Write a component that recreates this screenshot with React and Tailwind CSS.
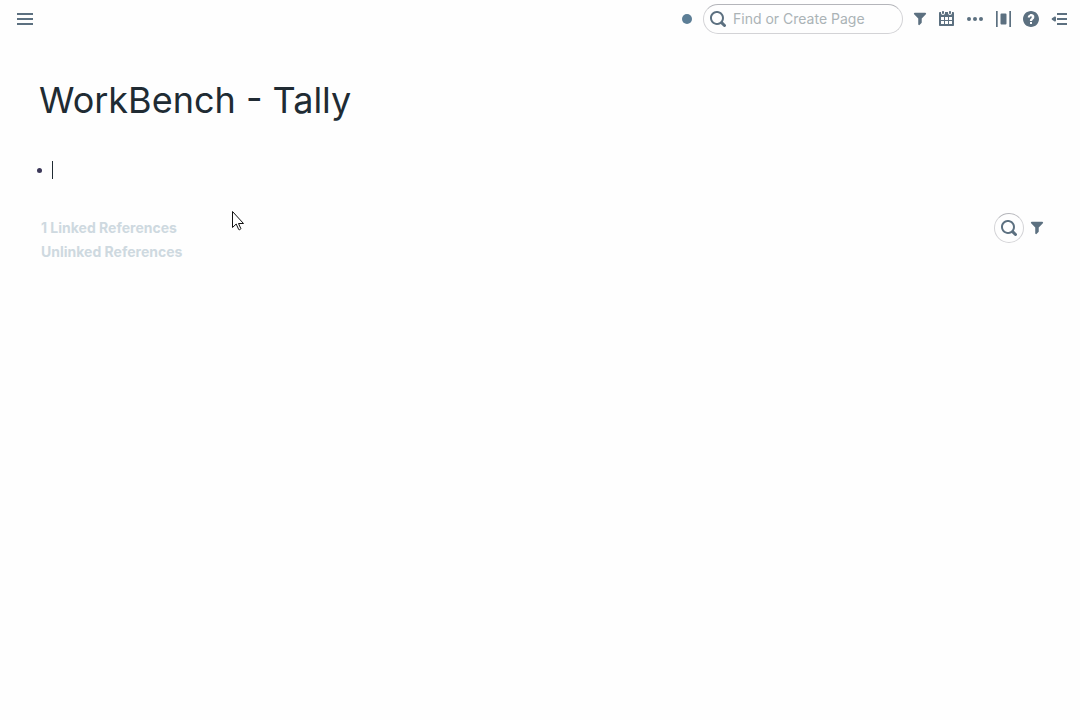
import React from "react";

function Icon({ children, className = "size-4" }) {
  return (
    <svg className={`block ${className}`} viewBox="0 0 16 16" fill="currentColor" fillRule="evenodd" aria-hidden="true">
      {children}
    </svg>
  );
}

const MenuIcon = () => (
  <Icon>
    <path d="M0 2h16v2H0zM0 7h16v2H0zM0 12h16v2H0z" />
  </Icon>
);

const SearchIcon = () => (
  <Icon>
    <path d="M15.55 13.43l-2.67-2.68a6.94 6.94 0 001.11-3.76c0-3.87-3.13-7-7-7s-7 3.13-7 7 3.13 7 7 7c1.39 0 2.68-.42 3.76-1.11l2.68 2.67a1.498 1.498 0 102.12-2.12zm-8.56-1.44c-2.76 0-5-2.24-5-5s2.24-5 5-5 5 2.24 5 5-2.24 5-5 5z" />
  </Icon>
);

const FilterIcon = () => (
  <Icon className="size-3.5">
    <path d="M13.99.99h-12a1.003 1.003 0 00-.71 1.71l4.71 4.71V14a1.003 1.003 0 001.71.71l2-2c.18-.18.29-.43.29-.71V7.41L14.7 2.7a1.003 1.003 0 00-.71-1.71z" />
  </Icon>
);

const CalendarIcon = () => (
  <Icon>
    <path d="M11 3c.6 0 1-.5 1-1V1c0-.6-.4-1-1-1s-1 .4-1 1v1c0 .5.4 1 1 1zm3-2h-1v1c0 1.100-.9 2-2 2s-2-.9-2-2V1H6v1c0 1.100-.9 2-2 2s-2-.9-2-2V1H1c-.6 0-1 .5-1 1v12c0 .6.4 1 1 1h13c.6 0 1-.4 1-1V2c0-.6-.5-1-1-1zM5 13H2v-3h3v3zm0-4H2V6h3v3zm4 4H6v-3h3v3zm0-4H6V6h3v3zm4 4h-3v-3h3v3zm0-4h-3V6h3v3zM4 3c.6 0 1-.5 1-1V1c0-.6-.4-1-1-1S3 .4 3 1v1c0 .5.4 1 1 1z" />
  </Icon>
);

const MoreIcon = () => (
  <Icon>
    <circle cx="2" cy="8" r="2" />
    <circle cx="8" cy="8" r="2" />
    <circle cx="14" cy="8" r="2" />
  </Icon>
);

const ColumnsIcon = () => (
  <Icon>
    <path d="M1 0h1.700v16H1zM14.300 0H16v16h-1.700zM6.500 2.500h4a1 1 0 011 1v9a1 1 0 01-1 1h-4a1 1 0 01-1-1v-9a1 1 0 011-1z" />
  </Icon>
);

const HelpIcon = () => (
  <Icon>
    <path d="M8 0C3.580 0 0 3.580 0 8s3.580 8 8 8 8-3.580 8-8-3.580-8-8-8zM7 13v-2h2v2H7zm4.210-6.120c-.06.19-.15.37-.25.54-.1.170-.22.320-.36.470-.130.150-.280.310-.430.470l-.4.400c-.13.120-.24.250-.33.380-.09.130-.16.260-.23.400S9.100 9.830 9.100 10H6.880c0-.31.010-.58.050-.81s.100-.43.190-.61c.09-.19.200-.36.340-.53.140-.17.310-.35.520-.56.200-.19.380-.37.510-.55.140-.18.220-.38.240-.61.020-.33-.03-.6-.18-.77-.15-.17-.35-.26-.62-.26-.17 0-.32.030-.44.090-.12.060-.22.150-.29.260-.07.110-.13.230-.17.370-.04.140-.06.290-.06.460H4.750c.01-.46.090-.88.240-1.260s.37-.7.650-.97.620-.48 1.010-.62C7.050 3.070 7.500 3 8 3c.51 0 .97.060 1.390.190.41.120.75.310 1.030.540s.49.510.64.850c.15.330.22.710.22 1.130 0 .43-.02.810-.07 1.170z" />
  </Icon>
);

const MenuOpenIcon = () => (
  <Icon>
    <path d="M6 2h10v2H6zM6 7h10v2H6zM6 12h10v2H6zM4 5.500c-.28 0-.53.11-.71.29L1 7.300a.9.900 0 000 1.400l2.290 1.510A1 1 0 005 9.500v-3a1 1 0 00-1-1z" />
  </Icon>
);

function IconButton({ label, children }) {
  return (
    <button type="button" aria-label={label} className="shrink-0 text-[#5c7080]">
      {children}
    </button>
  );
}

function TopBar() {
  return (
    <header className="flex items-center justify-between pt-1 pr-[13px] pl-[17px]">
      <IconButton label="Open left sidebar"><MenuIcon /></IconButton>
      <div className="flex items-center gap-[11px]">
        <span className="size-2.5 rounded-full bg-[#5c7e96]" />
        <div className="flex items-center gap-2.5">
          <label className="flex h-[30px] w-[200px] items-center gap-[7px] rounded-full border border-[#d3d3d6] border-t-[#b4b5ba] px-1.5 text-[#5c7080]">
            <SearchIcon />
            <input
              type="text"
              aria-label="Find or Create Page"
              placeholder="Find or Create Page"
              className="min-w-0 flex-1 bg-transparent text-sm text-[#182026] outline-none placeholder:text-[#abb3b6]"
            />
          </label>
          <nav className="flex items-center gap-3">
            <IconButton label="Filter page"><FilterIcon /></IconButton>
            <IconButton label="Daily notes"><CalendarIcon /></IconButton>
            <IconButton label="More options"><MoreIcon /></IconButton>
            <IconButton label="Page width"><ColumnsIcon /></IconButton>
            <IconButton label="Help"><HelpIcon /></IconButton>
            <IconButton label="Open right sidebar"><MenuOpenIcon /></IconButton>
          </nav>
        </div>
      </div>
    </header>
  );
}

function Block() {
  return (
    <div className="mt-[34px] flex items-center gap-2.5">
      <span className="-ml-0.5 size-[5px] rounded-full bg-[#3c3859]" />
      <span className="h-[18px] w-px bg-[#202b33]" />
      <input type="text" aria-label="Block text" className="h-6 min-w-0 flex-1 bg-transparent text-base caret-transparent outline-none" autoFocus />
    </div>
  );
}

function References() {
  return (
    <section className="mt-[31px] flex items-start justify-between text-sm leading-6 font-bold text-[#ced9e0]">
      <div className="flex flex-col items-start px-0.5 pt-[3px]">
        <button type="button" className="font-bold">1 Linked References</button>
        <button type="button" className="font-bold">Unlinked References</button>
      </div>
      <div className="flex items-center gap-1.5">
        <button type="button" aria-label="Search references" className="flex size-[30px] items-center justify-center rounded-full border border-[#d3d3d6] border-t-[#b4b5ba] text-[#5c7080]">
          <SearchIcon />
        </button>
        <IconButton label="Filter references"><FilterIcon /></IconButton>
      </div>
    </section>
  );
}

function Pointer() {
  return (
    <svg className="pointer-events-none absolute top-[211px] left-[232px] h-5 w-3" viewBox="0 0 12 20" aria-hidden="true">
      <path d="M.5.5v16l3.700-3.500 2.500 5.500c.3.700 2.400-.2 2.100-1L6.500 12.500h5z" fill="#fff" stroke="#111" />
    </svg>
  );
}

export default function App() {
  return (
    <div className="relative min-h-screen bg-[#fefefe] font-['Inter',sans-serif] text-[#202b33]">
      <TopBar />
      <main className="pt-[42px] pr-9 pl-[39px]">
        <h1 className="text-4xl leading-[48px] font-normal">WorkBench - Tally</h1>
        <Block />
        <References />
      </main>
      <Pointer />
    </div>
  );
}
